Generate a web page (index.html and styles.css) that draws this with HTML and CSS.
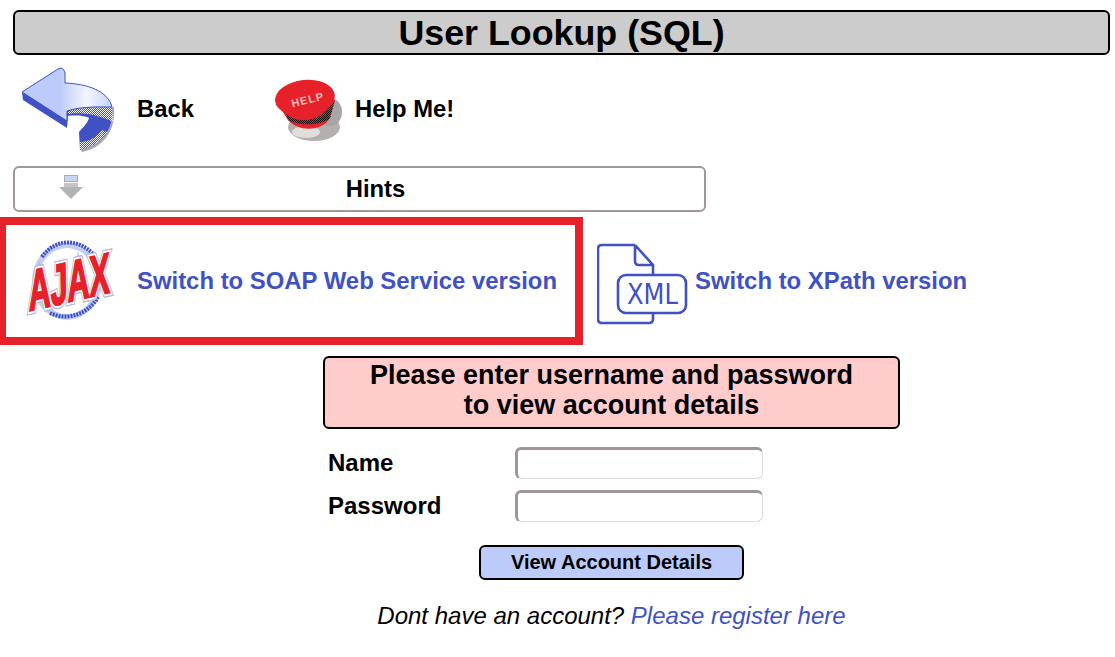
FILE: index.html
```html
<!DOCTYPE html>
<html>

<head>
  <title>User Lookup (SQL)</title>
  <meta charset="utf-8" />
  <link rel="stylesheet" href="styles.css">
</head>

<body>
  <h1 class="page-title">User Lookup (SQL)</h1>

  <div class="nav-row">
    <a class="nav-item nav-back" href="#">
      <svg class="icon-back" width="110" height="100" viewBox="0 0 110 100">
        <defs>
          <pattern id="dither" width="2" height="2" patternUnits="userSpaceOnUse">
            <rect width="1" height="1" fill="#fff" />
            <rect x="1" y="1" width="1" height="1" fill="#fff" />
          </pattern>
          <pattern id="ditherDark" width="2" height="2" patternUnits="userSpaceOnUse">
            <rect width="1" height="1" fill="#140808" />
            <rect x="1" y="1" width="1" height="1" fill="#140808" />
          </pattern>
          <linearGradient id="backTop" x1="0" y1="0" x2="1" y2="0">
            <stop offset="0.42" stop-color="#bccbf9" />
            <stop offset="0.72" stop-color="#f4f6fe" />
            <stop offset="1" stop-color="#c6d2f8" />
          </linearGradient>
        </defs>
        <path class="back-shade" d="M104 47 C106 72 92 88 72 92 L71 90 L100 47 Z" />
        <path class="back-side" d="M12 32 L13 40 L57 68 L58 56 C65 55 76 56 79 58 C78 63 72 68 69 72 L70 90 C90 85 104 72 102 47 L60 44 Z" />
        <path fill="url(#dither)" d="M58 51 C72 46 92 47 102 47 L103 62 C95 58 85 55 78 54 C70 53 62 53 58 54 Z" />
        <path fill="url(#dither)" d="M70 90 C82 87 92 81 97 72 L92 70 C86 78 78 82 70 82 Z" />
        <path fill="url(#backTop)" stroke="#3f51c4" stroke-width="1" stroke-linejoin="round" d="M12 32 L48 9 Q53 6 55 13 L55 23 C78 24 98 31 102 47 C92 47 72 46 57 51 L57 61 Z" />
      </svg>
      <span>Back</span>
    </a>
    <a class="nav-item nav-help" href="#">
      <svg width="80" height="80" viewBox="0 0 80 80">
        <ellipse cx="44" cy="57" rx="26" ry="14" fill="#b5b0b0" />
        <ellipse cx="36" cy="62" rx="14" ry="6" fill="#e0dddd" />
        <ellipse cx="60" cy="42" rx="12" ry="14" fill="#a9a5a5" />
        <path d="M9 36 L18 50 C28 62 52 62 60 48 L65 30 Z" fill="#e6212a" />
        <path d="M16 44 C28 54 50 54 65 30 L60 48 C52 56 28 56 18 50 Z" fill="url(#ditherDark)" />
        <ellipse cx="35" cy="28" rx="30" ry="18" transform="rotate(-6 35 28)" fill="#e6212a" />
        <text class="help-label" x="21" y="34" transform="rotate(-14 36 30)">HELP</text>
      </svg>
      <span>Help Me!</span>
    </a>
  </div>

  <div class="hints-bar">
    <svg class="hints-arrow" width="24" height="24" viewBox="0 0 24 24">
      <rect x="5.5" y="0.5" width="13" height="6" fill="#c9d3f5" stroke="#aaa" />
      <rect x="5" y="8" width="14" height="4" fill="#c4c4c4" />
      <path d="M0 12 H24 L12 24 Z" fill="#b3b3b3" />
    </svg>
    <span class="hints-label">Hints</span>
  </div>

  <div class="version-row">
    <a class="ajax-switch" href="#">
      <svg class="logo-ajax" width="120" height="112" viewBox="0 0 120 112">
        <defs>
          <text id="ajaxWord" transform="translate(23 86) rotate(-13) skewX(-12) scale(.78 1.4)">AJAX</text>
        </defs>
        <ellipse cx="61" cy="56" rx="35" ry="39" fill="#c3cff5" />
        <ellipse cx="61" cy="56" rx="29" ry="33" fill="#fff" />
        <path d="M36 32 C48 14 72 12 88 30" class="globe-line" />
        <path d="M44 88 C60 96 82 90 92 72" class="globe-line" />
        <use class="ajax-edge" href="#ajaxWord" />
        <use class="ajax-halo" href="#ajaxWord" />
        <use class="ajax-fill" href="#ajaxWord" />
      </svg>
      <span>Switch to SOAP Web Service version</span>
    </a>
    <a class="xml-switch" href="#">
      <svg class="icon-xml" width="91" height="83" viewBox="0 0 91 83">
        <path class="xml-line" d="M38 2 H5 Q1 2 1 6 V76 Q1 80 5 80 H52 Q56 80 56 76 V70 M38 2 L56 22 V32 M38 2 V18 Q38 22 42 22 H56" />
        <rect class="xml-label" x="21" y="32" width="68" height="38" rx="8" />
        <text class="xml-word" x="30" y="61" textLength="51" lengthAdjust="spacingAndGlyphs">XML</text>
      </svg>
      <span>Switch to XPath version</span>
    </a>
  </div>

  <div class="login-panel">
    <div class="login-message">Please enter username and password<br />to view account details</div>
    <form class="login-form">
      <label class="field-label" for="username">Name</label>
      <input class="field-input" id="username" type="text" />
      <label class="field-label" for="password">Password</label>
      <input class="field-input" id="password" type="password" />
      <button class="submit-btn" type="button">View Account Details</button>
    </form>
    <p class="register-line">Dont have an account? <a href="#">Please register here</a></p>
  </div>
</body>

</html>
```

FILE: styles.css
```css
body {
  font-family: 'Liberation Sans', Arial, sans-serif;
  background: #fff;
  color: #000;
  margin: 0;
  padding: 0;
}
a {
  color: inherit;
  text-decoration: none;
}
svg {
  display: block;
  flex: none;
}
.page-title {
  box-sizing: border-box;
  height: 45px;
  margin: 10px 5px 0 13px;
  border: 2px solid #000;
  border-radius: 6px;
  background: #ccc;
  font-size: 35.8px;
  line-height: 42px;
  text-align: center;
}
.nav-row {
  display: flex;
  align-items: center;
  height: 100px;
  margin-top: 5px;
  padding-left: 10px;
  font-size: 23.8px;
  font-weight: bold;
}
.nav-item {
  display: flex;
  align-items: center;
}
.nav-back {
  width: 260px;
}
.nav-item span {
  margin-bottom: 2px;
}
.nav-back span {
  margin-left: 17px;
}
.nav-help span {
  margin-left: 5px;
}
.back-side {
  fill: #3f51c4;
}
.back-shade {
  fill: #a9a5b8;
}
.help-label {
  font-size: 11px;
  font-weight: bold;
  fill: #f0bcbc;
  letter-spacing: 1px;
}
.hints-bar {
  box-sizing: border-box;
  display: flex;
  align-items: center;
  width: 693px;
  height: 46px;
  margin: 6px 0 0 13px;
  border: 2px solid #a09898;
  border-radius: 6px;
}
.hints-arrow {
  margin: -5px 0 0 44px;
}
.hints-label {
  flex: 1;
  padding-right: 36px;
  font-size: 23.8px;
  font-weight: bold;
  text-align: center;
}
.version-row {
  display: flex;
  align-items: center;
  margin-top: 5px;
  font-size: 23.9px;
  font-weight: bold;
  color: #3f51c4;
}
.ajax-switch {
  box-sizing: border-box;
  display: flex;
  align-items: center;
  width: 583px;
  height: 128px;
  border: 8px solid #e6212a;
  border-left-width: 6px;
}
.logo-ajax {
  margin-right: 11px;
}
.globe-line {
  fill: none;
  stroke: #3f51c4;
  stroke-width: 4;
  stroke-dasharray: 2 1;
}
#ajaxWord {
  font-size: 40px;
  font-weight: bold;
}
.ajax-edge {
  fill: #b4bad2;
  stroke: #b4bad2;
  stroke-width: 6px;
}
.ajax-halo {
  fill: #fff;
  stroke: #fff;
  stroke-width: 4px;
}
.ajax-fill {
  fill: #e6212a;
  stroke: #e6212a;
  stroke-width: 1.5px;
}
.xml-switch {
  display: flex;
  align-items: center;
  margin-left: 14px;
}
.icon-xml {
  margin-top: 6px;
}
.xml-switch span {
  margin-left: 7px;
}
.xml-line {
  fill: none;
  stroke: #3f51c4;
  stroke-width: 2.6;
}
.xml-label {
  fill: #fff;
  stroke: #3f51c4;
  stroke-width: 2.6;
}
.xml-word {
  font-family: 'DejaVu Sans', sans-serif;
  font-size: 29px;
  font-weight: normal;
  fill: #3f51c4;
}
.login-panel {
  width: 577px;
  margin: 11px 0 0 323px;
}
.login-message {
  box-sizing: border-box;
  height: 73px;
  padding-top: 2px;
  border: 2px solid #000;
  border-radius: 6px;
  background: #fcc;
  font-size: 27px;
  font-weight: bold;
  line-height: 30px;
  text-align: center;
}
.login-form {
  display: grid;
  grid-template-columns: 192px 248px;
  grid-auto-rows: 32px;
  row-gap: 11px;
  align-items: center;
  margin-top: 18px;
}
.field-label {
  padding-left: 5px;
  font-size: 24px;
  font-weight: bold;
}
.field-input {
  box-sizing: border-box;
  width: 248px;
  height: 32px;
  padding: 0 4px;
  border-style: solid dotted dotted solid;
  border-width: 3px 1px 1px 3px;
  border-color: #9f9797 #b9b9b9 #b9b9b9 #9f9797;
  border-radius: 6px;
  outline: none;
}
.submit-btn {
  grid-column: 1 / 3;
  justify-self: start;
  box-sizing: border-box;
  width: 265px;
  height: 35px;
  margin: 26px 0 0 156px;
  border: 2px solid #000;
  border-radius: 6px;
  background: #bccbf9;
  font-family: inherit;
  font-size: 20px;
  font-weight: bold;
  color: #000;
}
.register-line {
  margin: 37px 0 0;
  font-size: 24px;
  font-style: italic;
  text-align: center;
}
.register-line a {
  color: #3f51c4;
}
```
